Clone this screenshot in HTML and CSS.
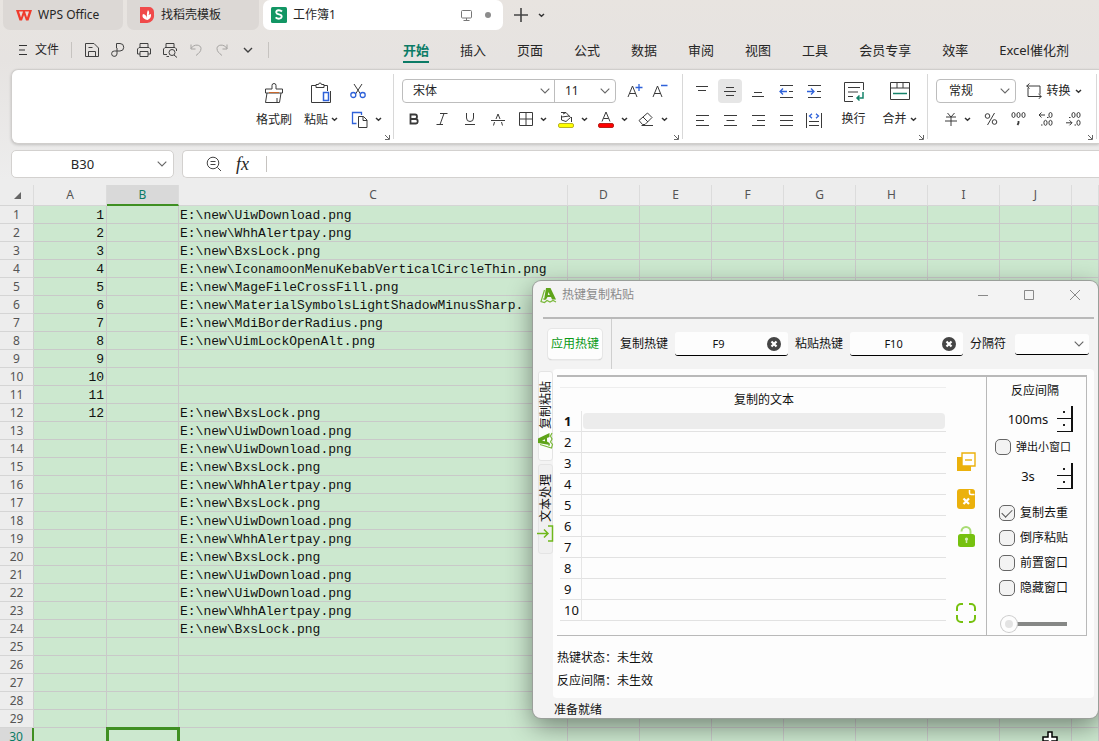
FILE: index.html
```html
<!DOCTYPE html>
<html lang="zh-CN">
<head>
<meta charset="utf-8">
<title>工作簿1 - WPS Office</title>
<link rel="stylesheet" href="styles.css">
</head>
<body>
<svg class="defs" aria-hidden="true">
  <symbol id="caret" viewBox="0 0 7 5"><path d="M1 1l2.500 2.300L6 1" fill="none" stroke="#333" stroke-width="1.500"/></symbol>
  <symbol id="chev" viewBox="0 0 10 6"><path d="M.7.700L5 5 9.300.700" fill="none" stroke="#666" stroke-width="1.100"/></symbol>
  <symbol id="launch" viewBox="0 0 6 6"><path d="M1 1l4 4M5.500 1v4.500H1" fill="none" stroke="#666"/></symbol>
  <symbol id="logo" viewBox="0 0 17 17"><path d="M6 1h4.500L16 12.500h-4l-1-2.500H7.500L6 12.500 4 13zM8.500 5L7.800 8h2z" fill="#5fa41a" fill-rule="evenodd"/><path d="M4.500 3L1 14.500l3.500 1L7 13.500l3 1.500 3-1.500 3 1.500M3 12h2" fill="none" stroke="#7ab83a" stroke-width="1.200"/></symbol>
  <symbol id="clear" viewBox="0 0 14 14"><circle cx="7" cy="7" r="7" fill="#454545"/><path d="M4.500 4.500l5 5m0-5l-5 5" stroke="#fff" stroke-width="2.200"/></symbol>
</svg>

<div class="app">
  <nav class="doc-tabs">
    <button class="doc-tab home"><svg width="16" height="12" viewBox="0 0 16 12"><path d="M0 1h16l-3.500 10.500H10L8 6l-2 5.500H3.500z" fill="#ef3b2d"/><path d="M3 2.500l2 6 2-6zM9 2.500l2 6 2-6z" fill="#e9dcd8"/></svg>WPS Office</button>
    <button class="doc-tab store"><svg width="16" height="16" viewBox="0 0 16 16"><path d="M1 0h9a5 5 0 0 1 5 5v3a7 7 0 0 1-7 8H1z" fill="#f04a4a"/><path d="M8.500 13C3 12 3 8.500 4 7c2.500.500 3.500 2 4 4 0-3-.500-5 1-8 2 2.500 1 4 .5 5l2.500-1c.5 3-1 5-3.500 6z" fill="#fff"/></svg>找稻壳模板</button>
    <button class="doc-tab active"><svg width="16" height="16" viewBox="0 0 16 16"><rect width="16" height="16" rx="1.500" fill="#129664"/><path d="M11 4.500Q9.500 3 7.500 3.200 5 3.500 5.300 5.500 5.600 7 8 7.400q2.700.400 2.700 2.100-.2 2.200-2.900 2.200-1.800 0-3.200-1.400" fill="none" stroke="#fff" stroke-width="1.900"/></svg><span class="doc-name">工作簿1</span><svg width="11" height="11" viewBox="0 0 11 11" fill="none" stroke="#777"><rect x=".5" y=".5" width="10" height="7.500" rx="1"/><path d="M5.500 8v2M2.500 10.500h6"/></svg><i class="dot"></i></button>
    <button class="add-tab" aria-label="新建"><svg width="14" height="14" viewBox="0 0 14 14"><path d="M7 0v14M0 7h14" stroke="#444" stroke-width="1.600"/></svg></button>
    <button class="add-tab" aria-label="标签列表"><svg width="7" height="5"><use href="#caret"/></svg></button>
  </nav>

  <div class="menu-row">
    <div class="quick">
      <button class="file"><svg width="10" height="12" viewBox="0 0 10 12"><path d="M1 1.500h8M1 6h6M1 10.500h8" stroke="#333"/></svg>文件</button>
      <i class="rule"></i>
      <button aria-label="保存"><svg width="16" height="16" viewBox="0 0 16 16"><path d="M1.500 1.500H10L14.500 6v8.500h-13zM4.500 14v-4.500h7V14M4.500 5.500h4"/></svg></button>
      <button aria-label="输出PDF"><svg width="16" height="16" viewBox="0 0 16 16"><path d="M6.500 6V1.500H10a3.700 3.700 0 0 1 0 7.500H4.500a2.700 2.700 0 1 0 2.500 3V6"/></svg></button>
      <button aria-label="打印"><svg width="16" height="16" viewBox="0 0 16 16"><path d="M4 6V1.500h8V6M4 12H1.500V7L3 5.500h10L14.500 7v5H12M4 9.500h8v5H4z"/></svg></button>
      <button aria-label="打印预览"><svg width="16" height="16" viewBox="0 0 16 16"><path d="M4 6V1.500h8V6M5 12.500H1.500V7L3 5.500h10L14.500 7v2M4.500 14.500H7"/><circle cx="10" cy="10.500" r="3"/><path d="M12 13l3 2.500"/></svg></button>
      <button class="dim" aria-label="撤销"><svg width="16" height="16" viewBox="0 0 16 16"><path d="M3 2.500v4.500h4.500M3 6.500c3-5 10-4 10 0 0 3-2 4.500-5 7"/></svg></button>
      <button class="dim" aria-label="恢复"><svg width="16" height="16" viewBox="0 0 16 16"><path d="M13 2.500v4.500H8.500M13 6.500c-3-5-10-4-10 0 0 3 2 4.500 5 7"/></svg></button>
      <button class="more" aria-label="自定义"><svg width="10" height="6" viewBox="0 0 10 6"><path d="M1 1l4 4 4-4" stroke-width="1.400"/></svg></button>
      <i class="rule"></i>
    </div>
    <nav class="menu">
      <a href="#" class="on">开始</a><a href="#">插入</a><a href="#">页面</a><a href="#">公式</a><a href="#">数据</a><a href="#">审阅</a><a href="#">视图</a><a href="#">工具</a><a href="#">会员专享</a><a href="#">效率</a><a href="#">Excel催化剂</a>
    </nav>
  </div>

  <section class="ribbon">
    <div class="group clip">
      <button class="tall"><svg width="20" height="22" viewBox="0 0 20 22"><path d="M8 7V3.500a2 2 0 0 1 4 0V7h6.500v4h-17V7zM3 11L1.500 20.500h14L17 11M13 20.500V16"/><path d="M5 10.500h10" stroke="#c8682c"/></svg><span>格式刷</span></button>
      <button class="tall"><svg width="22" height="22" viewBox="0 0 22 22"><path d="M6 3.500H1.500v17H11M14 3.500h3.500V9M6 5.500v-3h2.500a1.500 1.500 0 0 1 3 0H14v3zM11 20.500h9.500V9"/><path d="M13.500 10.500h5v8h-5z" stroke="#2f62d9" stroke-width="1.500"/></svg><span>粘贴<svg width="7" height="5"><use href="#caret"/></svg></span></button>
      <div class="pair">
        <button aria-label="剪切"><svg width="16" height="16" viewBox="0 0 16 16"><path d="M4 1l6.500 10M12 1L5.500 11"/><g stroke="#2f62d9" stroke-width="1.300"><circle cx="3.300" cy="12" r="2.500"/><circle cx="12.700" cy="12" r="2.500"/></g></svg></button>
        <button aria-label="复制"><svg width="17" height="17" viewBox="0 0 17 17"><path d="M5.500 12.500h-4V1.500h9V4" stroke="#2f62d9" stroke-width="1.300"/><path d="M7.500 5.500h5l3.500 3.500v7.500H7.500zM12 5.500V9.500h4"/></svg><svg width="7" height="5"><use href="#caret"/></svg></button>
      </div>
      <svg class="launch"><use href="#launch"/></svg>
    </div>

    <div class="group font">
      <div class="line">
        <div class="combo"><select class="face" aria-label="字体"><option>宋体</option></select><svg width="10" height="6"><use href="#chev"/></svg><select class="size" aria-label="字号"><option>11</option></select><svg width="10" height="6"><use href="#chev"/></svg></div>
        <button aria-label="增大字号"><svg width="16" height="16" viewBox="0 0 16 16"><path d="M1 14L5.500 3 10 14M2.500 10.500h6"/><path d="M12 1v7M8.500 4.500h7" stroke="#2f62d9" stroke-width="1.300"/></svg></button>
        <button aria-label="减小字号"><svg width="16" height="16" viewBox="0 0 16 16"><path d="M1 14L5.500 3 10 14M2.500 10.500h6"/><path d="M9 2.500h6.500" stroke="#2f62d9" stroke-width="1.300"/></svg></button>
      </div>
      <div class="line">
        <button aria-label="加粗"><svg width="12" height="12" viewBox="0 0 12 12"><path d="M2.500 1.500H7q2 0 2 2.200T7 6H2.500zM2.500 6h5q2.200 0 2.200 2.300T7.500 10.500h-5z" stroke-width="1.800"/></svg></button>
        <button aria-label="倾斜"><svg width="12" height="12" viewBox="0 0 12 12"><path d="M4 .5h7.500M.5 11.500H7M8 .5l-4 11"/></svg></button>
        <button aria-label="下划线"><svg width="12" height="12" viewBox="0 0 12 12"><path d="M2.500 0v5a3.500 3.500 0 0 0 7 0V0M1 11.500h10"/></svg></button>
        <button aria-label="删除线"><svg width="14" height="13" viewBox="0 0 14 13"><path d="M0 7.500h14M5 6L7 1l2 5M3.500 9L2.500 12.500M10.500 9l1 3.500"/></svg></button>
        <button class="drop" aria-label="边框"><svg width="14" height="14" viewBox="0 0 14 14"><path d="M.5.500h13v13H.5zM7 .5v13M.5 7h13"/></svg><svg width="7" height="5"><use href="#caret"/></svg></button>
        <button class="drop" aria-label="填充颜色"><svg width="16" height="17" viewBox="0 0 16 17"><path d="M5 3L8 1.500l4.500 5-4.500 4-4.500-1.500V4.500M3 1.500h5M13.500 6v5M3.500 6l8-1"/><rect x=".5" y="12.500" width="15" height="4" rx="1.500" fill="#ff0" stroke="#b9b325"/></svg><svg width="7" height="5"><use href="#caret"/></svg></button>
        <button class="drop" aria-label="字体颜色"><svg width="16" height="17" viewBox="0 0 16 17"><path d="M4 10.500L8 1l4 9.500M5.500 7.500h5"/><rect x=".5" y="12.500" width="15" height="4" rx="1.500" fill="#f00" stroke="#b5221b"/></svg><svg width="7" height="5"><use href="#caret"/></svg></button>
        <button class="drop" aria-label="清除"><svg width="16" height="16" viewBox="0 0 16 16"><path d="M9.500 2L14 6.500l-7 7H4.500L1 9.500zM5 6l5 5M3.500 14.500H15"/></svg><svg width="7" height="5"><use href="#caret"/></svg></button>
      </div>
      <svg class="launch"><use href="#launch"/></svg>
    </div>

    <div class="group align">
      <div class="cells">
        <button aria-label="顶端对齐"><svg width="14" height="14" viewBox="0 0 14 14"><path d="M1 2.500h12M3 6.500h8"/></svg></button>
        <button class="pressed" aria-label="垂直居中"><svg width="14" height="14" viewBox="0 0 14 14"><path d="M3 3.500h8M1 7.500h12M3 11.500h8"/></svg></button>
        <button aria-label="底端对齐"><svg width="14" height="14" viewBox="0 0 14 14"><path d="M3 8.500h8M1 12.500h12"/></svg></button>
        <button aria-label="减少缩进"><svg width="14" height="14" viewBox="0 0 14 14"><path d="M1 1.500h13M1 13.500h13M10 7.500h4"/><path d="M8 7.500H1M4 4.500l-3 3 3 3" stroke="#2f62d9" stroke-width="1.300"/></svg></button>
        <button aria-label="增加缩进"><svg width="14" height="14" viewBox="0 0 14 14"><path d="M1 1.500h13M1 13.500h13M10 7.500h4"/><path d="M0 7.500h7M4 4.500l3 3-3 3" stroke="#2f62d9" stroke-width="1.300"/></svg></button>
        <button aria-label="左对齐"><svg width="14" height="12" viewBox="0 0 14 12"><path d="M1 .5h13M1 5.500h8M1 10.500h13"/></svg></button>
        <button aria-label="居中"><svg width="14" height="12" viewBox="0 0 14 12"><path d="M1 .5h13M3.500 5.500h8M1 10.500h13"/></svg></button>
        <button aria-label="右对齐"><svg width="14" height="12" viewBox="0 0 14 12"><path d="M1 .5h13M6 5.500h8M1 10.500h13"/></svg></button>
        <button aria-label="两端对齐"><svg width="14" height="12" viewBox="0 0 14 12"><path d="M1 .5h13M1 5.500h13M1 10.500h13"/></svg></button>
        <button aria-label="分散对齐"><svg width="18" height="16" viewBox="0 0 18 16"><path d="M1.500 0v15M16.500 0v15M4 8.500h10M4 12.500h10"/><path d="M7 .7L4.500 3 7 5.300M11 .7L13.500 3 11 5.300" stroke="#2f62d9" stroke-width="1.300"/></svg></button>
      </div>
      <button class="tall"><svg width="20" height="20" viewBox="0 0 20 20"><path d="M9 19.500H.5V.5h19V8M4 5.500h12M4 10h10M4 14.500h5"/><path d="M19 10v6h-6M15.500 13.500L13 16l2.500 2.500" stroke="#14836a" stroke-width="1.500"/></svg><span>换行</span></button>
      <button class="tall"><svg width="20" height="18" viewBox="0 0 20 18"><path d="M.5.500h19v17H.5zM.5 6h19M7 .500V6M13 .500V6"/><path d="M3 11.500h14" stroke="#14836a" stroke-width="1.500"/></svg><span>合并<svg width="7" height="5"><use href="#caret"/></svg></span></button>
      <svg class="launch"><use href="#launch"/></svg>
    </div>

    <div class="group number">
      <div class="line">
        <div class="combo"><select class="format" aria-label="数字格式"><option>常规</option></select><svg width="10" height="6"><use href="#chev"/></svg></div>
        <button class="convert"><svg width="16" height="16" viewBox="0 0 16 16"><path d="M.5 3H14v8.500M2 5v8.500h13.500M3.500.500L.800 3l2.700 2.500M12.500 11l2.700 2.500-2.700 2.500"/></svg>转换<svg width="7" height="5"><use href="#caret"/></svg></button>
      </div>
      <div class="line">
        <button class="drop" aria-label="货币"><svg width="12" height="14" viewBox="0 0 12 14"><path d="M2.500 1L6 5l3.500-4M1 5h10M0 9h12M6 5v9"/></svg><svg width="7" height="5"><use href="#caret"/></svg></button>
        <button aria-label="百分比"><svg width="14" height="14" viewBox="0 0 14 14"><circle cx="3.500" cy="4" r="2.300"/><circle cx="10.500" cy="10" r="2.300"/><path d="M10.500 1l-7 12"/></svg></button>
        <button aria-label="千位分隔"><svg width="15" height="14" viewBox="0 0 15 14"><ellipse cx="2.500" cy="3" rx="1.600" ry="2.500"/><ellipse cx="7.500" cy="3" rx="1.600" ry="2.500"/><ellipse cx="12.500" cy="3" rx="1.600" ry="2.500"/><path d="M7.500 9v2l-1 2" stroke-width="1.800"/></svg></button>
        <button aria-label="增加小数位"><svg width="15" height="14" viewBox="0 0 15 14"><path d="M1 3h6M3.500.500L1 3l2.500 2.500M9 5.500h1.500M3 13h1.500"/><ellipse cx="12.500" cy="3" rx="1.600" ry="2.500"/><ellipse cx="7.500" cy="10.800" rx="1.600" ry="2.500"/><ellipse cx="12.500" cy="10.800" rx="1.600" ry="2.500"/></svg></button>
        <button aria-label="减少小数位"><svg width="15" height="14" viewBox="0 0 15 14"><path d="M0 10.800h6M3.500 8.300L6 10.800l-2.500 2.500M8.500 13H10M3 5.500h1.500"/><ellipse cx="7.500" cy="3" rx="1.600" ry="2.500"/><ellipse cx="12.500" cy="3" rx="1.600" ry="2.500"/><ellipse cx="12.500" cy="10.800" rx="1.600" ry="2.500"/></svg></button>
      </div>
      <svg class="launch"><use href="#launch"/></svg>
    </div>
  </section>

  <div class="formula-row">
    <div class="name-box"><input aria-label="名称框" value="B30"><svg width="10" height="6"><use href="#chev"/></svg></div>
    <div class="formula-box">
      <svg width="16" height="16" viewBox="0 0 16 16" fill="none" stroke="#444"><circle cx="7" cy="7" r="5.800"/><path d="M4.500 5.500h5M4.500 8.500h5M11.500 11.500l3.500 3.500"/></svg>
      <em>fx</em><i class="rule"></i>
      <input aria-label="编辑栏">
    </div>
  </div>

  <main class="sheet">
    <table>
      <colgroup><col class="c-head"><col class="c-a"><col class="c-b"><col class="c-c"><col class="c-n"><col class="c-n"><col class="c-n"><col class="c-n"><col class="c-n"><col class="c-n"><col class="c-n"><col></colgroup>
      <thead><tr><th class="corner"><svg width="7" height="7" viewBox="0 0 7 7"><path d="M7 0v7H0z" fill="#666"/></svg></th><th>A</th><th class="on">B</th><th>C</th><th>D</th><th>E</th><th>F</th><th>G</th><th>H</th><th>I</th><th>J</th><th></th></tr></thead>
      <tbody>
      <tr><th>1<td>1<td><td>E:\new\UiwDownload.png<td><td><td><td><td><td><td><td>
      <tr><th>2<td>2<td><td>E:\new\WhhAlertpay.png<td><td><td><td><td><td><td><td>
      <tr><th>3<td>3<td><td>E:\new\BxsLock.png<td><td><td><td><td><td><td><td>
      <tr><th>4<td>4<td><td>E:\new\IconamoonMenuKebabVerticalCircleThin.png<td><td><td><td><td><td><td><td>
      <tr><th>5<td>5<td><td>E:\new\MageFileCrossFill.png<td><td><td><td><td><td><td><td>
      <tr><th>6<td>6<td><td>E:\new\MaterialSymbolsLightShadowMinusSharp.<td><td><td><td><td><td><td><td>
      <tr><th>7<td>7<td><td>E:\new\MdiBorderRadius.png<td><td><td><td><td><td><td><td>
      <tr><th>8<td>8<td><td>E:\new\UimLockOpenAlt.png<td><td><td><td><td><td><td><td>
      <tr><th>9<td>9<td><td><td><td><td><td><td><td><td><td>
      <tr><th>10<td>10<td><td><td><td><td><td><td><td><td><td>
      <tr><th>11<td>11<td><td><td><td><td><td><td><td><td><td>
      <tr><th>12<td>12<td><td>E:\new\BxsLock.png<td><td><td><td><td><td><td><td>
      <tr><th>13<td><td><td>E:\new\UiwDownload.png<td><td><td><td><td><td><td><td>
      <tr><th>14<td><td><td>E:\new\UiwDownload.png<td><td><td><td><td><td><td><td>
      <tr><th>15<td><td><td>E:\new\BxsLock.png<td><td><td><td><td><td><td><td>
      <tr><th>16<td><td><td>E:\new\WhhAlertpay.png<td><td><td><td><td><td><td><td>
      <tr><th>17<td><td><td>E:\new\BxsLock.png<td><td><td><td><td><td><td><td>
      <tr><th>18<td><td><td>E:\new\UiwDownload.png<td><td><td><td><td><td><td><td>
      <tr><th>19<td><td><td>E:\new\WhhAlertpay.png<td><td><td><td><td><td><td><td>
      <tr><th>20<td><td><td>E:\new\BxsLock.png<td><td><td><td><td><td><td><td>
      <tr><th>21<td><td><td>E:\new\UiwDownload.png<td><td><td><td><td><td><td><td>
      <tr><th>22<td><td><td>E:\new\UiwDownload.png<td><td><td><td><td><td><td><td>
      <tr><th>23<td><td><td>E:\new\WhhAlertpay.png<td><td><td><td><td><td><td><td>
      <tr><th>24<td><td><td>E:\new\BxsLock.png<td><td><td><td><td><td><td><td>
      <tr><th>25<td><td><td><td><td><td><td><td><td><td><td>
      <tr><th>26<td><td><td><td><td><td><td><td><td><td><td>
      <tr><th>27<td><td><td><td><td><td><td><td><td><td><td>
      <tr><th>28<td><td><td><td><td><td><td><td><td><td><td>
      <tr><th>29<td><td><td><td><td><td><td><td><td><td><td>
      <tr class="current"><th>30<td><td class="picked"><td><td><td><td><td><td><td><td><td>
      </tbody>
    </table>
  </main>
</div>

<div class="window" role="dialog" aria-label="热键复制粘贴">
  <header class="title-bar">
    <svg width="17" height="17"><use href="#logo"/></svg><h1>热键复制粘贴</h1>
    <button aria-label="最小化"><svg width="10" height="10" viewBox="0 0 10 10"><path d="M0 5.500h10"/></svg></button>
    <button aria-label="最大化"><svg width="10" height="10" viewBox="0 0 10 10"><path d="M.5.500h9v9h-9z"/></svg></button>
    <button aria-label="关闭"><svg width="10" height="10" viewBox="0 0 10 10"><path d="M0 0l10 10M10 0L0 10"/></svg></button>
  </header>
  <div class="tools">
    <button class="apply">应用热键</button>
    <i class="split"></i>
    <label for="copy-key">复制热键</label>
    <div class="key"><input id="copy-key" value="F9"><svg width="14" height="14"><use href="#clear"/></svg></div>
    <label for="paste-key">粘贴热键</label>
    <div class="key"><input id="paste-key" value="F10"><svg width="14" height="14"><use href="#clear"/></svg></div>
    <label for="sep">分隔符</label>
    <div class="sep"><select id="sep"><option></option></select><svg width="10" height="6"><use href="#chev"/></svg></div>
  </div>
  <div class="content">
    <div class="side-tabs">
      <button class="on"><svg class="turn" width="17" height="17"><use href="#logo"/></svg>复制粘贴</button>
      <button><svg class="flip" width="17" height="17" viewBox="0 0 17 17"><path d="M0 8.500h11M7 4.500l4 4-4 4M11 1h4.500v15H11" fill="none" stroke="#6fb81c" stroke-width="1.500"/></svg>文本处理</button>
    </div>
    <div class="pane">
      <div class="panel">
        <table class="copied">
          <thead><tr><th></th><th>复制的文本</th></tr></thead>
          <tbody>
            <tr class="cur"><th>1</th><td><i></i></td></tr><tr><th>2</th><td></td></tr><tr><th>3</th><td></td></tr><tr><th>4</th><td></td></tr><tr><th>5</th><td></td></tr><tr><th>6</th><td></td></tr><tr><th>7</th><td></td></tr><tr><th>8</th><td></td></tr><tr><th>9</th><td></td></tr><tr><th>10</th><td></td></tr>
          </tbody>
        </table>
        <div class="actions">
          <button aria-label="移除"><svg width="20" height="20" viewBox="0 0 20 20"><path d="M1 5h14v14H1z" fill="#ebb10c"/><path d="M6 1h13v13H6z" fill="#fff" stroke="#ebb10c" stroke-width="1.400"/><path d="M9 8h7" stroke="#ebb10c" stroke-width="1.400"/></svg></button>
          <button aria-label="清空"><svg width="20" height="22" viewBox="0 0 20 22"><path d="M4 1h12a3 3 0 0 1 3 3v14a3 3 0 0 1-3 3H4a3 3 0 0 1-3-3V4a3 3 0 0 1 3-3z" fill="#ebb10c"/><path d="M13.500 2v3a1.500 1.500 0 0 0 1.500 1.500h3.500" fill="none" stroke="#fff" stroke-width="1.500"/><path d="M7.500 10.500l5.500 5.500M13 10.500L7.500 16" stroke="#fff" stroke-width="2.200"/></svg></button>
          <button aria-label="解锁"><svg width="20" height="22" viewBox="0 0 20 22"><path d="M5.500 5.500a4.500 4.500 0 0 1 9 0V8" fill="none" stroke="#a9dc74" stroke-width="2"/><rect x="2" y="8" width="17" height="13" rx="2.500" fill="#76c10f"/><circle cx="10.500" cy="13" r="1.600" fill="#d5efb5"/><path d="M10.500 13v4" stroke="#d5efb5" stroke-width="1.500"/></svg></button>
          <button class="expand" aria-label="全屏"><svg width="20" height="20" viewBox="0 0 20 20" fill="none" stroke="#76c10f" stroke-width="2"><path d="M1 8V5a4 4 0 0 1 4-4h2M13 1h2a4 4 0 0 1 4 4v3M19 12v3a4 4 0 0 1-4 4h-2M7 19H5a4 4 0 0 1-4-4v-3"/></svg></button>
        </div>
        <div class="options">
          <label for="delay">反应间隔</label>
          <div class="spin"><input id="delay" value="100ms"><div class="steps"><button aria-label="增加间隔"></button><button aria-label="减少间隔"></button></div></div>
          <label class="check narrow"><input type="checkbox">弹出小窗口</label>
          <div class="spin second"><input aria-label="弹出时长" value="3s"><div class="steps"><button aria-label="增加时长"></button><button aria-label="减少时长"></button></div></div>
          <label class="check"><input type="checkbox" checked>复制去重</label>
          <label class="check"><input type="checkbox">倒序粘贴</label>
          <label class="check"><input type="checkbox">前置窗口</label>
          <label class="check"><input type="checkbox">隐藏窗口</label>
          <input type="range" aria-label="透明度" value="0">
        </div>
      </div>
      <p>热键状态：未生效</p>
      <p>反应间隔：未生效</p>
    </div>
  </div>
  <footer>准备就绪</footer>
</div>
<svg class="pointer" width="16" height="16" viewBox="0 0 16 16"><path d="M6 1h4v5h5v4h-5v5H6v-5H1V6h5z" fill="#fff" stroke="#000" stroke-width="1.500"/></svg>
</body>
</html>
```
FILE: styles.css
```css
* { box-sizing: border-box; }
body {
  margin: 0;
  height: 100vh;
  overflow: hidden;
  position: relative;
  font: 12px/16px "Noto Sans", "Noto Sans CJK SC", sans-serif;
  color: #262626;
  background: #ededed;
}
button, input, select {
  font: inherit;
  color: inherit;
  border: 0;
  padding: 0;
  margin: 0;
  background: none;
  appearance: none;
  outline: 0;
}
button { display: flex; align-items: center; justify-content: center; }
svg { flex: none; display: block; }
.defs { position: absolute; width: 0; height: 0; }
.app {
  height: 100%;
  display: flex;
  flex-direction: column;
  background: linear-gradient(#e8e4e0, #e6e3e1 60px, #ededed 180px);
}
.rule { width: 1px; height: 16px; background: #c6c3c0; }

/* document tabs */
.doc-tabs { display: flex; gap: 4px; height: 30px; padding-left: 3px; }
.doc-tab {
  justify-content: flex-start;
  gap: 6px;
  padding: 0 12px;
  background: #dcd8d5;
  border-radius: 0 0 7px 7px;
}
.home { width: 120px; padding-left: 13px; }
.store { width: 132px; }
.active { width: 240px; padding: 0 12px 0 8px; background: #fff; border-radius: 7px; }
.doc-name { flex: 1; text-align: left; }
.dot { width: 6px; height: 6px; border-radius: 50%; background: #8c8c8c; margin-left: 7px; }
.add-tab { width: 14px; margin-left: 7px; }
.add-tab + .add-tab { width: 7px; margin-left: 6px; }

/* menu */
.menu-row { display: flex; height: 39px; align-items: center; white-space: nowrap; }
.quick { width: 403px; padding-left: 18px; display: flex; align-items: center; gap: 10px; }
.quick button svg { fill: none; stroke: #404040; }
.quick button.dim svg { stroke: #a5a3a1; }
.quick .file { gap: 7px; margin-right: 2px; }
.quick .file + .rule { margin-right: 2px; }
.quick .more { margin-left: 3px; }
.quick > .rule:last-child { margin-left: 5px; }
.menu { display: flex; gap: 31px; font-size: 13px; line-height: 22px; }
.menu a { color: inherit; text-decoration: none; border-bottom: 2px solid transparent; padding-top: 2px; }
.menu .on { color: #0b7b66; font-weight: 700; border-color: #0b7b66; }

/* ribbon */
.ribbon {
  display: flex;
  height: 75px;
  margin-left: 11px;
  flex: none;
  background: #fff;
  border: 1px solid #d0cecc;
  border-right: 0;
  border-radius: 7px 0 0 7px;
  box-shadow: 0 1px 3px rgba(0, 0, 0, .18);
  overflow: hidden;
}
.group { position: relative; padding: 9px 10px 9px 8px; flex: none; }
.group::after {
  content: "";
  position: absolute;
  right: 0; top: 4px; bottom: 4px;
  width: 1px;
  background: #d8d8d8;
}
.ribbon button { height: 24px; width: 28px; gap: 7px; border-radius: 4px; }
.ribbon button svg { fill: none; stroke: #3a3a3a; }
.ribbon .tall { flex-direction: column; width: 38px; height: 52px; gap: 4px; justify-content: space-between; padding-top: 3px; white-space: nowrap; }
.tall span { display: flex; align-items: center; gap: 3px; height: 24px; }
.ribbon .drop { width: 40px; }
.ribbon .pressed { width: 24px; margin: 0 2px; background: #e6e6e6; }
.launch { position: absolute; right: 4px; bottom: 3px; width: 6px; height: 6px; }
.clip { width: 382px; display: flex; justify-content: flex-end; gap: 9px; padding-right: 12px; }
.pair { display: flex; flex-direction: column; gap: 4px; align-items: flex-start; margin-left: 1px; }
.ribbon .pair button:first-child { width: 16px; }
.ribbon .pair button:last-child { width: 32px; }
.font { width: 289px; }
.line { display: flex; height: 24px; margin-bottom: 4px; align-items: center; }
.font .line:last-of-type { margin-left: -2px; }
.font button:not(.drop) + .drop { margin-left: 2px; }
.combo {
  display: flex;
  align-items: center;
  height: 24px;
  border: 1px solid #bdbdbd;
  border-radius: 4px;
  padding-right: 5px;
  margin-right: 6px;
}
.face { width: 137px; padding-left: 10px; }
.size { width: 46px; padding-left: 10px; height: 22px; border-left: 1px solid #bdbdbd; margin-left: 4px; }
.align { width: 245px; display: flex; gap: 9px; padding-left: 5px; }
.cells { display: grid; grid-template-columns: repeat(5, 28px); gap: 4px 0; margin-right: -2px; }
.number { width: 169px; }
.format { width: 63px; padding-left: 12px; }
.number .combo { margin-right: 8px; }
.ribbon .convert { width: 60px; gap: 4px; }
.number .line:last-of-type { margin-left: 2px; }

/* formula bar */
.formula-row { display: flex; flex: none; gap: 8px; margin: 6px 0 7px 11px; height: 28px; }
.name-box, .formula-box {
  display: flex;
  align-items: center;
  background: #fff;
  border: 1px solid #d3d1cf;
  border-radius: 5px;
}
.name-box { width: 163px; padding-right: 6px; }
.name-box input { flex: 1; min-width: 0; text-align: center; font-size: 13px; padding-right: 4px; }
.formula-box { flex: 1; border-right: 0; border-radius: 5px 0 0 5px; padding-left: 23px; gap: 14px; }
.formula-box em { font: italic 18px/20px "Liberation Serif", serif; width: 16px; }
.formula-box input { flex: 1; }

/* grid */
.sheet { flex: 1; min-height: 0; overflow: hidden; }
.sheet table { width: 100%; table-layout: fixed; border-collapse: separate; border-spacing: 0; }
.c-head { width: 34px; }
.c-a { width: 73px; }
.c-b { width: 72px; }
.c-c { width: 389px; }
.c-n { width: 72px; }
.sheet th { padding: 0; font-weight: 400; font-size: 12px; color: #555; text-align: center; border-bottom: 1px solid #d5d5d5; }
.sheet thead th { height: 21px; border-right: 1px solid #dcdcdc; }
.sheet thead th.on { background: #d9d9d9; color: #0b7b66; border-bottom: 2px solid #3f8f22; }
.corner svg { margin-left: 14px; }
.sheet td {
  height: 18px;
  padding: 3px 2px 0 1px;
  background: #cce8cf;
  border-right: 1px solid #c9c9c9;
  border-bottom: 1px solid #c9c9c9;
  font: 13px/14px "Liberation Mono", monospace;
  color: #111;
  white-space: nowrap;
}
.sheet td:nth-child(2) { text-align: right; }
.sheet tbody th { border-right: 1px solid #d0d0d0; line-height: 17px; }
.sheet .current th { background: #d9d9d9; color: #0b7b66; border-right: 2px solid #3f8f22; }
.sheet .picked { outline: 3px solid #3f8f22; outline-offset: -2px; }

/* floating window */
.window {
  position: absolute;
  top: 281px;
  right: 1px;
  width: 565px;
  height: 437px;
  display: flex;
  flex-direction: column;
  background: #f3f3f3;
  border-radius: 8px;
  box-shadow: 0 0 0 1px #9a9f9a, 0 8px 26px rgba(0, 0, 0, .45);
  color: #111;
}
.title-bar {
  display: flex;
  align-items: center;
  height: 38px;
  padding: 0 13px 10px 7px;
  position: relative;
}
.title-bar::after { content: ""; position: absolute; left: 10px; right: 4px; bottom: 0; height: 2px; background: #b9b9b9; }
.title-bar h1 { flex: 1; margin: 0 0 0 5px; font-size: 12px; font-weight: 400; line-height: 16px; color: #8a8a8a; }
.title-bar button { width: 20px; height: 20px; margin-left: 26px; }
.title-bar button svg { fill: none; stroke: #888; }
.tools { display: flex; align-items: center; height: 50px; padding: 0 9px 0 15px; white-space: nowrap; }
.apply { width: 54px; height: 30px; background: #fdfdfd; border-radius: 4px; color: #0a9a17; box-shadow: 0 0 0 1px #e6e6e6, 0 1px 1px #aaa; }
.split { width: 1px; height: 50px; background: #cfcfcf; margin: 0 8px 0 9px; }
.key, .sep {
  display: flex;
  align-items: center;
  height: 24px;
  margin: 0 7px;
  width: 113px;
  padding-right: 7px;
  background: #fdfdfd;
  border-bottom: 1px solid #000;
  border-radius: 3px;
}
.key input { flex: 1; min-width: 0; text-align: center; font-size: 11px; padding-right: 7px; padding-left: 2px; }
.sep { flex: 1; height: 21px; margin: 0 0 0 9px; padding-right: 5px; }
.sep select { flex: 1; min-width: 0; height: 20px; }
.content { flex: 1; display: flex; min-height: 0; }
.side-tabs { width: 20px; padding: 2px 3px 0 5px; display: flex; flex-direction: column; gap: 3px; }
.side-tabs button {
  writing-mode: vertical-rl;
  text-orientation: sideways;
  rotate: 180deg;
  width: 15px;
  height: 90px;
  gap: 3px;
  padding-top: 11px;
  justify-content: flex-start;
  border: 1px solid #e4e4e4;
  border-radius: 3px;
  background: #f0f0f0;
}
.side-tabs .on { background: #fcfcfc; }
.flip { rotate: 180deg; }
.turn { rotate: 90deg; }
.pane { flex: 1; margin-right: 4px; padding: 6px 7px 0 4px; background: #fdfdfd; border-radius: 4px; }
.panel {
  display: flex;
  height: 261px;
  border: solid #b9b9b9;
  border-width: 2px 1px 1px 0;
  margin-bottom: 14px;
}
.pane p { margin: 0 0 7px; line-height: 16px; }
.copied { width: 386px; height: 234px; margin: 10px 0 0 3px; table-layout: fixed; border-collapse: separate; border-spacing: 0; border-top: 1px solid #eee; flex: none; }
.copied th { font-weight: 400; padding: 0; }
.copied thead th { height: 23px; }
.copied thead th:first-child { width: 22px; }
.copied tbody th { height: 21px; text-align: left; padding-left: 4px; font-size: 13px; line-height: 20px; border-right: 1px solid #e6e6e6; border-bottom: 1px solid #e2e2e2; }
.copied td { padding: 0 1px; border-bottom: 1px solid #e2e2e2; }
.copied .cur th { font-weight: 700; }
.copied .cur i { display: block; height: 16px; border-radius: 4px; background: #ececec; }
.actions { flex: 1; display: flex; flex-direction: column; align-items: center; gap: 16px; padding: 75px 0 12px; }
.actions .expand { margin-top: auto; }
.options { width: 100px; border-left: 1px solid #b9b9b9; padding: 6px 0 0 12px; display: flex; flex-direction: column; }
.options > label:first-child { padding-left: 12px; }
.spin { display: flex; height: 26px; margin-top: 7px; align-items: center; }
.spin input { width: 58px; text-align: center; font-size: 13px; line-height: 16px; }
.second { margin: 8px 0 16px; }
.steps button { width: 16px; height: 13px; border: solid #111; border-width: 0 2px 1px 0; }
.steps button::before { content: ""; width: 2px; height: 2px; background: #222; }
.check { display: flex; align-items: center; gap: 5px; height: 16px; margin-bottom: 9px; white-space: nowrap; }
.check input { width: 16px; height: 16px; border: 1px solid #666; border-radius: 5px; background: #f3f3f3; flex: none; display: grid; place-items: center; }
.check input:checked::after { content: ""; width: 9px; height: 5px; border: solid #555; border-width: 0 0 1px 1px; rotate: -45deg; translate: 0 -1px; }
.narrow { font-size: 11px; margin: 7px 0 0 -4px; }
input[type=range] { width: 66px; height: 18px; margin: 10px 0 0 2px; background: linear-gradient(#868886, #868886) center / 100% 4px no-repeat; }
input[type=range]::-webkit-slider-thumb { appearance: none; width: 16px; height: 16px; border: 4px solid #fdfdfd; border-radius: 50%; background: #e3e3e3; box-shadow: 0 0 0 1px #ccc; }
footer { height: 20px; padding: 4px 0 0 21px; line-height: 16px; }
.pointer { position: absolute; left: 1042px; top: 731px; }
```
